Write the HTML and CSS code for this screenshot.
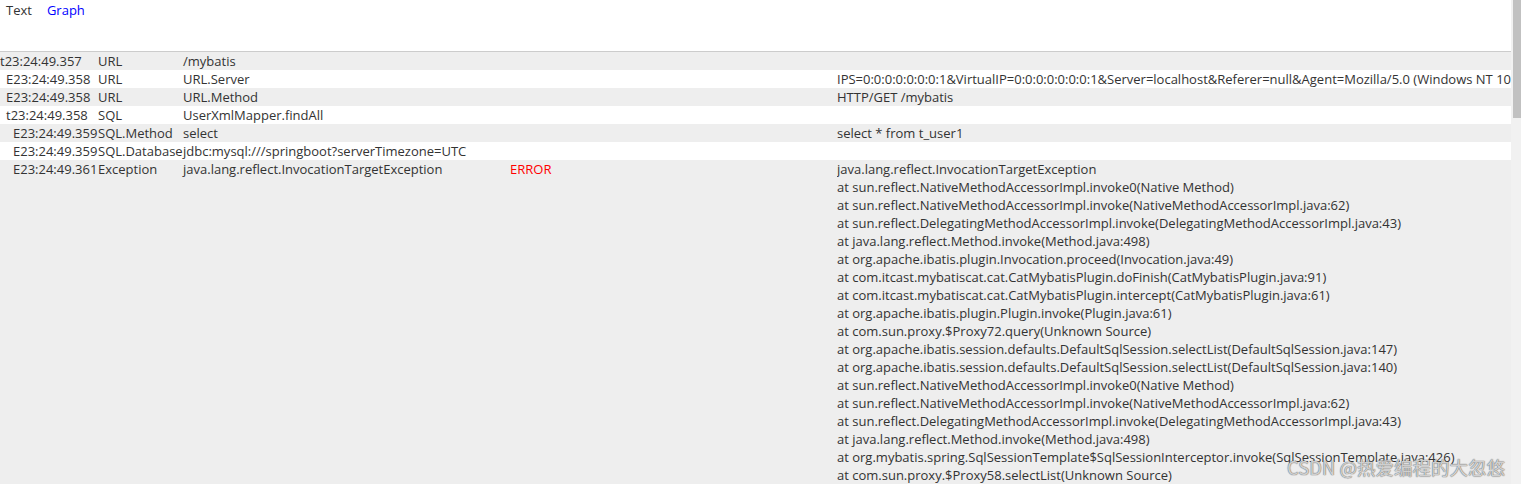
FILE: index.html
```html
<!DOCTYPE html>
<html lang="en">
<head>
<title>logview</title>
<meta charset="utf-8">
<link rel="stylesheet" href="styles.css">
</head>
<body>
<div class="page">
  <div class="main">
    <div class="tabs">
      <a class="tab">Text</a>
      <a class="tab graph">Graph</a>
    </div>

    <table class="logview">
      <colgroup>
        <col class="c-time">
        <col class="c-type">
        <col class="c-name">
        <col class="c-status">
        <col class="c-data">
      </colgroup>
      <tr class="odd">
        <td>t23:24:49.357</td>
        <td>URL</td>
        <td>/mybatis</td>
        <td></td>
        <td></td>
      </tr>
      <tr class="even">
        <td class="l1">E23:24:49.358</td>
        <td>URL</td>
        <td>URL.Server</td>
        <td></td>
        <td>IPS=0:0:0:0:0:0:0:1&amp;VirtualIP=0:0:0:0:0:0:0:1&amp;Server=localhost&amp;Referer=null&amp;Agent=Mozilla/5.0 (Windows NT 10.0; Win64; x64) AppleWebKit/537.36</td>
      </tr>
      <tr class="odd">
        <td class="l1">E23:24:49.358</td>
        <td>URL</td>
        <td>URL.Method</td>
        <td></td>
        <td>HTTP/GET /mybatis</td>
      </tr>
      <tr class="even">
        <td class="l1">t23:24:49.358</td>
        <td>SQL</td>
        <td>UserXmlMapper.findAll</td>
        <td></td>
        <td></td>
      </tr>
      <tr class="odd">
        <td class="l2">E23:24:49.359</td>
        <td>SQL.Method</td>
        <td>select</td>
        <td></td>
        <td>select * from t_user1</td>
      </tr>
      <tr class="even">
        <td class="l2">E23:24:49.359</td>
        <td>SQL.Database</td>
        <td>jdbc:mysql:///springboot?serverTimezone=UTC</td>
        <td></td>
        <td></td>
      </tr>
      <tr class="odd">
        <td class="l2">E23:24:49.361</td>
        <td>Exception</td>
        <td>java.lang.reflect.InvocationTargetException</td>
        <td class="error">ERROR</td>
        <td>java.lang.reflect.InvocationTargetException<br>
at sun.reflect.NativeMethodAccessorImpl.invoke0(Native Method)<br>
at sun.reflect.NativeMethodAccessorImpl.invoke(NativeMethodAccessorImpl.java:62)<br>
at sun.reflect.DelegatingMethodAccessorImpl.invoke(DelegatingMethodAccessorImpl.java:43)<br>
at java.lang.reflect.Method.invoke(Method.java:498)<br>
at org.apache.ibatis.plugin.Invocation.proceed(Invocation.java:49)<br>
at com.itcast.mybatiscat.cat.CatMybatisPlugin.doFinish(CatMybatisPlugin.java:91)<br>
at com.itcast.mybatiscat.cat.CatMybatisPlugin.intercept(CatMybatisPlugin.java:61)<br>
at org.apache.ibatis.plugin.Plugin.invoke(Plugin.java:61)<br>
at com.sun.proxy.$Proxy72.query(Unknown Source)<br>
at org.apache.ibatis.session.defaults.DefaultSqlSession.selectList(DefaultSqlSession.java:147)<br>
at org.apache.ibatis.session.defaults.DefaultSqlSession.selectList(DefaultSqlSession.java:140)<br>
at sun.reflect.NativeMethodAccessorImpl.invoke0(Native Method)<br>
at sun.reflect.NativeMethodAccessorImpl.invoke(NativeMethodAccessorImpl.java:62)<br>
at sun.reflect.DelegatingMethodAccessorImpl.invoke(DelegatingMethodAccessorImpl.java:43)<br>
at java.lang.reflect.Method.invoke(Method.java:498)<br>
at org.mybatis.spring.SqlSessionTemplate$SqlSessionInterceptor.invoke(SqlSessionTemplate.java:426)<br>
at com.sun.proxy.$Proxy58.selectList(Unknown Source)<br>
at org.mybatis.spring.SqlSessionTemplate.selectList(SqlSessionTemplate.java:223)</td>
      </tr>
    </table>

    <div class="watermark">CSDN @热爱编程的大忽悠</div>
  </div>

  <div class="scrollbar">
    <div class="thumb"></div>
  </div>
</div>
</body>
</html>
```

FILE: styles.css
```css
* {
  padding: 0;
  margin: 0;
  box-sizing: border-box;
}

html, body {
  height: 100%;
}

body {
  background-color: #fff;
  color: #333;
  font-family: 'Open Sans', 'Noto Sans', sans-serif;
  font-size: 13px;
  line-height: 18px;
  overflow: hidden;
}

.page {
  display: flex;
  height: 100%;
}

.main {
  position: relative;
  flex-grow: 1;
  overflow: hidden;
}

.tabs {
  display: flex;
  gap: 15px;
  height: 52px;
  padding: 1px 0 0 6px;
  border-bottom: 1px solid #ccc;
}

.tab {
  color: #333;
  text-decoration: none;
}

.tab.graph {
  color: #00f;
}

.logview {
  width: 100%;
  table-layout: fixed;
  border-collapse: collapse;
}

.c-time { width: 98px; }
.c-type { width: 85px; }
.c-name { width: 327px; }
.c-status { width: 327px; }

.logview td {
  padding: 0;
  vertical-align: top;
  white-space: nowrap;
  overflow: visible;
  height: 18px;
}

.logview td:last-child {
  overflow: hidden;
}

.logview tr.odd {
  background-color: #eee;
}

.logview tr.even {
  background-color: #fff;
}

.logview td.l1 {
  padding-left: 6px;
}

.logview td.l2 {
  padding-left: 13px;
}

.error {
  color: #f00;
}

.watermark {
  position: absolute;
  right: 6px;
  bottom: 5px;
  font-family: 'Noto Sans CJK SC', sans-serif;
  font-size: 18.5px;
  line-height: 24px;
  color: rgba(255, 255, 255, 0.7);
  text-shadow: 0 0 1px #666, 0 0 1px #666;
}

.scrollbar {
  width: 10px;
  flex-shrink: 0;
  background-color: #f1f1f1;
  padding-left: 2px;
}

.thumb {
  width: 8px;
  height: 118px;
  background-color: #c1c1c1;
}
```
